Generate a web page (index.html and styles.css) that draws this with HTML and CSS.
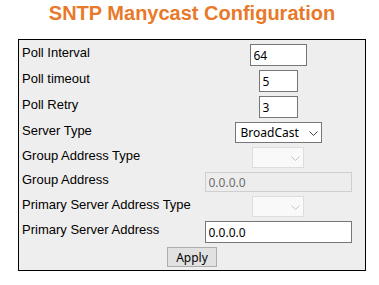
FILE: index.html
```html
<!DOCTYPE html>
<html lang="en">
<head>
  <meta charset="UTF-8">
  <meta name="viewport" content="width=device-width, initial-scale=1.0">
  <title>SNTP Manycast Configuration</title>
  <link rel="stylesheet" href="styles.css">
</head>
<body>

  <div class="page">
    <h1 class="page-title">SNTP Manycast Configuration</h1>

    <form class="config-form" onsubmit="return false;">
      <div class="config-grid">
        <label class="field-label" for="poll-interval">Poll Interval</label>
        <div class="field-control"><input id="poll-interval" class="text-input input-interval" type="text" value="64"></div>

        <label class="field-label" for="poll-timeout">Poll timeout</label>
        <div class="field-control"><input id="poll-timeout" class="text-input input-short" type="text" value="5"></div>

        <label class="field-label" for="poll-retry">Poll Retry</label>
        <div class="field-control"><input id="poll-retry" class="text-input input-short" type="text" value="3"></div>

        <label class="field-label" for="server-type">Server Type</label>
        <div class="field-control">
          <span class="select-wrap select-server">
            <select id="server-type" class="select-input">
              <option>BroadCast</option>
              <option>MultiCast</option>
            </select>
            <svg class="select-arrow" width="9" height="5" viewBox="0 0 9 5"><path d="M0.5 0.5 L4.5 4.5 L8.5 0.5" fill="none" stroke="#444" stroke-width="1"/></svg>
          </span>
        </div>

        <label class="field-label" for="group-address-type">Group Address Type</label>
        <div class="field-control">
          <span class="select-wrap select-small">
            <select id="group-address-type" class="select-input" disabled>
              <option></option>
            </select>
            <svg class="select-arrow" width="9" height="5" viewBox="0 0 9 5"><path d="M0.5 0.5 L4.5 4.5 L8.5 0.5" fill="none" stroke="#c4c4c4" stroke-width="1"/></svg>
          </span>
        </div>

        <label class="field-label" for="group-address">Group Address</label>
        <div class="field-control"><input id="group-address" class="text-input input-wide input-disabled" type="text" value="0.0.0.0" disabled></div>

        <label class="field-label" for="primary-address-type">Primary Server Address Type</label>
        <div class="field-control">
          <span class="select-wrap select-small">
            <select id="primary-address-type" class="select-input" disabled>
              <option></option>
            </select>
            <svg class="select-arrow" width="9" height="5" viewBox="0 0 9 5"><path d="M0.5 0.5 L4.5 4.5 L8.5 0.5" fill="none" stroke="#c4c4c4" stroke-width="1"/></svg>
          </span>
        </div>

        <label class="field-label" for="primary-address">Primary Server Address</label>
        <div class="field-control"><input id="primary-address" class="text-input input-wide" type="text" value="0.0.0.0"></div>

        <div class="form-actions">
          <button type="submit" class="apply-button">Apply</button>
        </div>
      </div>
    </form>
  </div>

</body>
</html>
```

FILE: styles.css
```css
body {
  margin: 0;
  background-color: #fff;
  font-family: "Liberation Sans", Arial, sans-serif;
  color: #000;
}

.page {
  width: 348px;
  margin-left: 18px;
}

.page-title {
  margin: 2px 0 14px;
  font-size: 20px;
  font-weight: bold;
  line-height: 23px;
  text-align: center;
  color: #e8792b;
}

.config-grid {
  display: grid;
  grid-template-columns: 170px 170px;
  column-gap: 2px;
  row-gap: 2px;
  padding: 3px 2px 2px;
  background-color: #efeeee;
  border: 1px solid #000;
}

.field-label {
  align-self: center;
  padding: 0 1px 5px;
  font-size: 13px;
  line-height: 15px;
  white-space: nowrap;
}

.field-control {
  display: flex;
  justify-content: center;
  align-items: center;
  padding: 1px;
}

.text-input {
  box-sizing: border-box;
  height: 22px;
  padding: 0 3px;
  background-color: #fff;
  border: 1px solid #767676;
  border-radius: 0;
  font-family: "Noto Sans", "Open Sans", sans-serif;
  font-size: 12px;
  color: #000;
}

.input-interval {
  width: 57px;
}

.input-short {
  width: 39px;
}

.input-wide {
  width: 147px;
}

.input-disabled {
  height: 20px;
  background-color: #eeeded;
  border-color: #cfcfcf;
  color: #6d6d6d;
}

.select-wrap {
  position: relative;
  display: inline-block;
}

.select-input {
  box-sizing: border-box;
  width: 100%;
  height: 21px;
  padding: 0 18px 0 5px;
  -webkit-appearance: none;
  appearance: none;
  background-color: #fff;
  border: 1px solid #767676;
  border-radius: 0;
  font-family: "Noto Sans", "Open Sans", sans-serif;
  font-size: 12px;
  color: #000;
}

.select-input:disabled {
  border-color: #d6d6d6;
}

.select-server {
  width: 87px;
}

.select-small {
  width: 52px;
}

.select-arrow {
  position: absolute;
  right: 4px;
  top: 9px;
}

.form-actions {
  grid-column: 1 / 3;
  display: flex;
  justify-content: center;
  padding: 1px;
}

.apply-button {
  box-sizing: border-box;
  width: 50px;
  height: 20px;
  padding: 0;
  background-color: #e1e1e1;
  border: 1px solid #adadad;
  border-radius: 0;
  font-family: "Noto Sans", "Open Sans", sans-serif;
  font-size: 12px;
  color: #000;
  cursor: pointer;
}
```
